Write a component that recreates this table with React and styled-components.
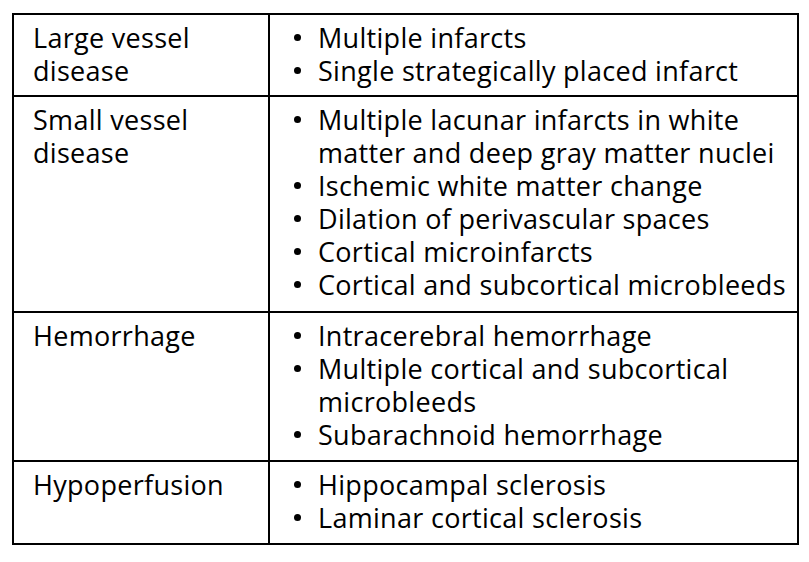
import React from 'react';
import styled, { createGlobalStyle } from 'styled-components';

const GlobalStyle = createGlobalStyle`
  body {
    margin: 0;
    background: #fff;
    font-family: "Open Sans", "Noto Sans", sans-serif;
    color: #000;
  }
`;

const Page = styled.div`
  padding: 13px 10px 0 12px;
`;

const Table = styled.div`
  width: 787px;
  box-sizing: border-box;
  display: grid;
  grid-template-columns: 256px 1fr;
  border: 2px solid #000;
  font-size: 27px;
  line-height: 33px;
  letter-spacing: 0.3px;
`;

const Cell = styled.div`
  padding: 6px 0 ${(p) => p.$bottom || 9}px;
  border-bottom: ${(p) => (p.$last ? 'none' : '2px solid #000')};
`;

const Label = styled(Cell)`
  padding-left: 19px;
  padding-right: 10px;
  border-right: 2px solid #000;
`;

const Items = styled(Cell).attrs({ as: 'ul' })`
  margin: 0;
  padding-left: 24px;
  padding-right: 6px;
  list-style: none;
`;

const Item = styled.li`
  display: flex;

  &::before {
    content: '';
    flex: none;
    width: 7px;
    height: 7px;
    margin: 13px 17px 0 0;
    border-radius: 50%;
    background: #000;
  }
`;

const rows = [
  { label: ['Large vessel', 'disease'], items: ['Multiple infarcts', 'Single strategically placed infarct'], bottom: 8 },
  {
    label: ['Small vessel', 'disease'],
    items: [
      'Multiple lacunar infarcts in white matter and deep gray matter nuclei',
      'Ischemic white matter change',
      'Dilation of perivascular spaces',
      'Cortical microinfarcts',
      'Cortical and subcortical microbleeds',
    ],
    bottom: 10,
  },
  {
    label: ['Hemorrhage'],
    items: ['Intracerebral hemorrhage', 'Multiple cortical and subcortical microbleeds', 'Subarachnoid hemorrhage'],
  },
  { label: ['Hypoperfusion'], items: ['Hippocampal sclerosis', 'Laminar cortical sclerosis'] },
];

export default function App() {
  return (
    <Page>
      <GlobalStyle />
      <Table>
        {rows.map((row, i) => {
          const last = i === rows.length - 1;
          return (
            <React.Fragment key={row.label[0]}>
              <Label $last={last} $bottom={row.bottom}>
                {row.label.map((l) => (
                  <div key={l}>{l}</div>
                ))}
              </Label>
              <Items $last={last} $bottom={row.bottom}>
                {row.items.map((t) => (
                  <Item key={t}>{t}</Item>
                ))}
              </Items>
            </React.Fragment>
          );
        })}
      </Table>
    </Page>
  );
}
